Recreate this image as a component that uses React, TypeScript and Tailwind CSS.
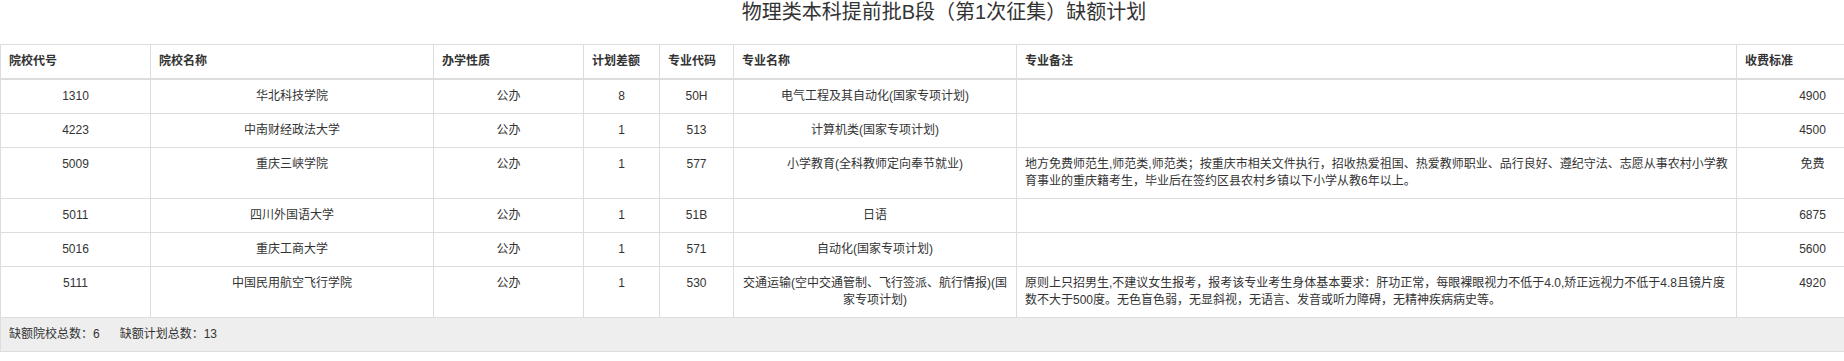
import React from "react"

type Row = {
  code: string
  school: string
  kind: string
  diff: string
  majorCode: string
  major: React.ReactNode
  note: React.ReactNode
  fee: string
}

const rows: Row[] = [
  { code: "1310", school: "华北科技学院", kind: "公办", diff: "8", majorCode: "50H", major: "电气工程及其自动化(国家专项计划)", note: "", fee: "4900" },
  { code: "4223", school: "中南财经政法大学", kind: "公办", diff: "1", majorCode: "513", major: "计算机类(国家专项计划)", note: "", fee: "4500" },
  {
    code: "5009",
    school: "重庆三峡学院",
    kind: "公办",
    diff: "1",
    majorCode: "577",
    major: "小学教育(全科教师定向奉节就业)",
    note: (
      <>
        地方免费师范生,师范类,师范类；按重庆市相关文件执行，招收热爱祖国、热爱教师职业、品行良好、遵纪守法、志愿从事农村小学教
        <br />
        育事业的重庆籍考生，毕业后在签约区县农村乡镇以下小学从教6年以上。
      </>
    ),
    fee: "免费",
  },
  { code: "5011", school: "四川外国语大学", kind: "公办", diff: "1", majorCode: "51B", major: "日语", note: "", fee: "6875" },
  { code: "5016", school: "重庆工商大学", kind: "公办", diff: "1", majorCode: "571", major: "自动化(国家专项计划)", note: "", fee: "5600" },
  {
    code: "5111",
    school: "中国民用航空飞行学院",
    kind: "公办",
    diff: "1",
    majorCode: "530",
    major: (
      <>
        交通运输(空中交通管制、飞行签派、航行情报)(国
        <br />
        家专项计划)
      </>
    ),
    note: (
      <>
        原则上只招男生,不建议女生报考，报考该专业考生身体基本要求：肝功正常，每眼裸眼视力不低于4.0,矫正远视力不低于4.8且镜片度
        <br />
        数不大于500度。无色盲色弱，无显斜视，无语言、发音或听力障碍，无精神疾病病史等。
      </>
    ),
    fee: "4920",
  },
]

const headers = ["院校代号", "院校名称", "办学性质", "计划差额", "专业代码", "专业名称", "专业备注", "收费标准"]

export default function App() {
  const td = "border border-[#ddd] px-2 py-2 align-top leading-[17px] whitespace-nowrap"

  return (
    <div
      className="w-[1844px] h-[361px] overflow-hidden bg-white text-[12px] text-[#333]"
      style={{ fontFamily: '"Liberation Sans", "Noto Sans CJK SC", sans-serif' }}
    >
      <div className="w-[1888px]">
        {/* TITLE */}
        <div className="h-[44px] text-center text-[20px] leading-[25px] text-[#333]">
          物理类本科提前批B段（第1次征集）缺额计划
        </div>

        {/* PLAN TABLE */}
        <table className="w-[1888px] table-fixed border-collapse">
          <colgroup>
            <col className="w-[150px]" />
            <col className="w-[283px]" />
            <col className="w-[150px]" />
            <col className="w-[76px]" />
            <col className="w-[74px]" />
            <col className="w-[283px]" />
            <col className="w-[720px]" />
            <col className="w-[152px]" />
          </colgroup>
          <thead>
            <tr>
              {headers.map((h) => (
                <th
                  key={h}
                  className="border border-[#ddd] border-b-2 px-2 py-2 text-left font-bold leading-[17px] align-bottom"
                >
                  {h}
                </th>
              ))}
            </tr>
          </thead>
          <tbody>
            {rows.map((r) => (
              <tr key={r.code}>
                <td className={`${td} text-center`}>{r.code}</td>
                <td className={`${td} text-center`}>{r.school}</td>
                <td className={`${td} text-center`}>{r.kind}</td>
                <td className={`${td} text-center`}>{r.diff}</td>
                <td className={`${td} text-center`}>{r.majorCode}</td>
                <td className={`${td} text-center`}>{r.major}</td>
                <td className={`${td} text-left`}>{r.note}</td>
                <td className={`${td} text-center`}>{r.fee}</td>
              </tr>
            ))}
            {/* SUMMARY FOOTER */}
            <tr>
              <td colSpan={8} className="border border-[#ddd] bg-[#eee] px-2 py-2 leading-[17px] text-left">
                <span>缺额院校总数：6</span>
                <span className="ml-[20px]">缺额计划总数：13</span>
              </td>
            </tr>
          </tbody>
        </table>
      </div>
    </div>
  )
}
